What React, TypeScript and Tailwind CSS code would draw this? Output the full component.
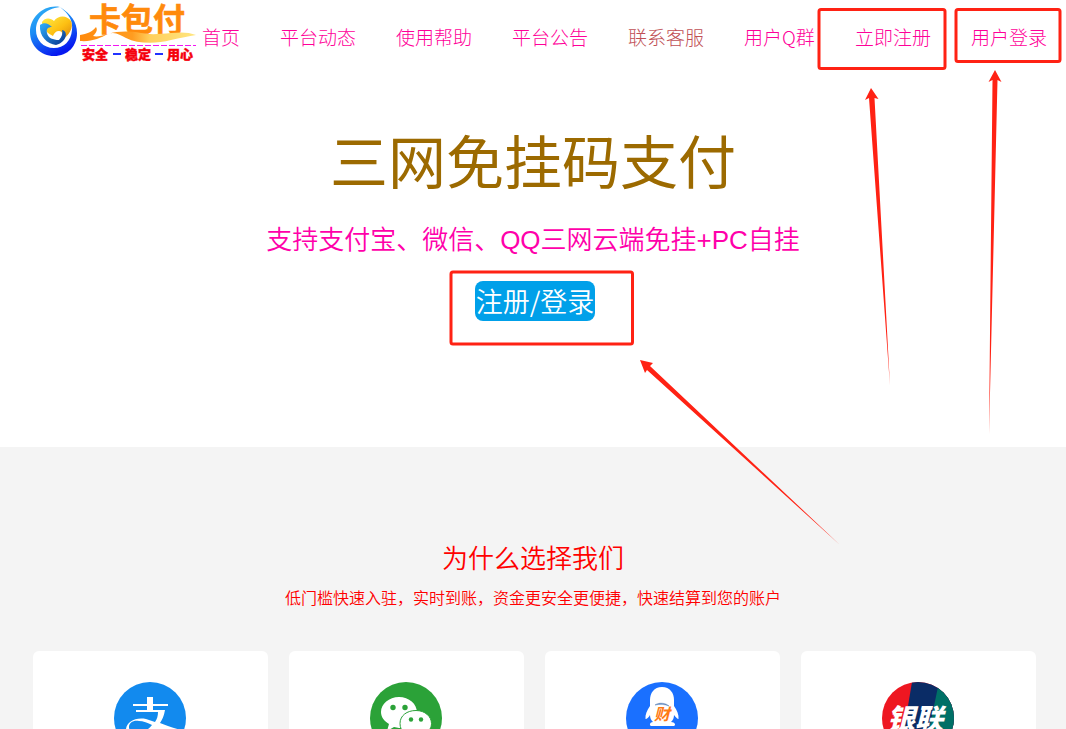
import type { ReactNode } from "react";

const navItems = [
  { label: "首页", color: "text-[#ff0099]" },
  { label: "平台动态", color: "text-[#ff0099]" },
  { label: "使用帮助", color: "text-[#ff0099]" },
  { label: "平台公告", color: "text-[#ff0099]" },
  { label: "联系客服", color: "text-[#c04f55]" },
  { label: "用户Q群", color: "text-[#ff0099]" },
  { label: "立即注册", color: "text-[#ff0099]" },
  { label: "用户登录", color: "text-[#ff0099]" },
];

function Logo() {
  return (
    <svg className="overflow-visible" width="176" height="64" viewBox="24 0 176 64" role="img" aria-label="卡包付">
      <defs>
        <linearGradient id="ring" x1="0" y1="0" x2="0.5" y2="1">
          <stop offset="0" stopColor="#35b6f5" />
          <stop offset="0.45" stopColor="#1b8df5" />
          <stop offset="1" stopColor="#0719f0" />
        </linearGradient>
        <linearGradient id="heart" x1="0" y1="0" x2="1" y2="1">
          <stop offset="0" stopColor="#fff04a" />
          <stop offset="0.55" stopColor="#fdbf12" />
          <stop offset="1" stopColor="#d9820c" />
        </linearGradient>
        <linearGradient id="hand" x1="0" y1="0" x2="1" y2="1">
          <stop offset="0" stopColor="#2fb0ff" />
          <stop offset="1" stopColor="#06328c" />
        </linearGradient>
        <linearGradient id="swoosh" x1="0" y1="0" x2="1" y2="0">
          <stop offset="0" stopColor="#ff8a0c" />
          <stop offset="0.45" stopColor="#ff9c20" />
          <stop offset="0.6" stopColor="#ffcf5c" />
          <stop offset="1" stopColor="#ffe680" />
        </linearGradient>
      </defs>
      <path
        d="M60 7C44 4 30 17 30 32c0 14 11 24 24 24 14 0 23-10 23-23 0-11-6-19-17-26 9 7 13 14 12 23-1 11-8 18-18 18-11 0-18-8-18-18C36 18 45 9 60 7Z"
        fill="url(#ring)"
      />
      <path
        d="M42 22c3-5 9-4 12-1 4-6 13-6 17 0 3 7-2 14-9 19 1-5 1-9-3-9-3 0-5 2-6 5-4-2-12-7-11-14Z"
        fill="url(#heart)"
      />
      <path
        d="M40 25c4-3 8-2 12 2-4 0-6 2-5 6 1 5 6 7 12 7 3-3 4-7 3-10 5 1 5 7 1 11-2 2-4 3-7 4-9-1-17-9-16-20Z"
        fill="url(#hand)"
      />
      <text
        x="89"
        y="31"
        fontSize="32"
        fontWeight="700"
        fill="#ff8a0c"
        stroke="#ff8a0c"
        strokeWidth="0.6"
        className="font-['Noto_Sans_CJK_SC',sans-serif]"
      >
        卡包付
      </text>
      <path
        d="M96 27c-4 5-9 7-16 8v6c12 1 20-3 28-7 7-3 12 1 18 4 12 6 30 6 45 2 9-2 18-4 25-5-7-3-16-3-25-2-12 1-20 2-30 0-12-2-23-2-33 1-7 2-11 3-15 2 3-3 5-6 3-9Z"
        fill="url(#swoosh)"
      />
      <path d="M81 45.5h115" stroke="#f216f2" strokeWidth="1" strokeDasharray="6 2" />
      <g
        fontSize="13"
        fontWeight="900"
        fill="#f5000c"
        stroke="#f5000c"
        strokeWidth="0.4"
        className="font-['Noto_Sans_CJK_SC',sans-serif]"
      >
        <text x="82" y="59">安全</text>
        <text x="125" y="59">稳定</text>
        <text x="167" y="59">用心</text>
      </g>
      <path d="M113 54h8M155 54h8" stroke="#2233ff" strokeWidth="2" />
    </svg>
  );
}

function AlipayIcon() {
  return (
    <svg width="72" height="72" viewBox="0 0 72 72" aria-hidden="true">
      <circle cx="36" cy="36" r="36" fill="#128aee" />
      <path
        d="M33 15h6v7h15v2H39v4h12c-1 6-3 10-5 13 7 3 13 5 25 8l-3 9c-10-3-17-7-25-11-6 7-13 10-20 10-8 0-12-4-11-10 1-7 9-12 20-10l9 3c2-3 3-6 3-10H22v-2h11v-4H19v-2h14Zm-8 24c-6-1-10 2-10 6s3 6 8 6c6 0 11-3 15-8-4-2-9-4-13-4Z"
        fill="#fff"
        fillRule="evenodd"
      />
    </svg>
  );
}

function WechatIcon() {
  return (
    <svg width="72" height="72" viewBox="0 0 72 72" aria-hidden="true">
      <circle cx="36" cy="36" r="36" fill="#2ba238" />
      <path d="M29 15c10 0 18 7 18 15.5S39 46 29 46l-5-1-7 4 2-7c-5-3-8-7-8-12 0-8 8-15 18-15Z" fill="#fff" />
      <circle cx="23" cy="25.5" r="2.7" fill="#2ba238" />
      <circle cx="35" cy="25.5" r="2.7" fill="#2ba238" />
      <path
        d="M46 28.5c9 0 15.500 6 15.500 13 0 4-2 7-6 10l2 6-7-3-5 1c-9 0-15.500-6-15.500-14s7-13 16-13Z"
        fill="#fff"
        stroke="#2ba238"
        strokeWidth="1"
      />
      <circle cx="41" cy="37.5" r="2.2" fill="#2ba238" />
      <circle cx="51" cy="37.5" r="2.2" fill="#2ba238" />
    </svg>
  );
}

function QqIcon() {
  return (
    <svg width="72" height="72" viewBox="0 0 72 72" aria-hidden="true">
      <circle cx="36" cy="36" r="36" fill="#1a70ff" />
      <path
        d="M36 5c8 0 12 6 12 13v6c3 4 5 9 4.500 13-1 0-3-2-4.500-4 0 3-1 5-3 7 4 0 5 3 3 4H25c-2-1-1-4 2-4-2-2-3-4-3-7-1 2-3 4-4.500 4C19 33 21 28 24 24v-6c0-7 4-13 12-13Z"
        fill="#fff"
      />
      <path d="M29 23c4-3 11-2 14 1-5-2-9-2-14-1Z" fill="#5a82b8" stroke="#5a82b8" strokeWidth="0.5" />
      <text
        x="28"
        y="38"
        fontSize="16"
        fontWeight="700"
        fontStyle="italic"
        fill="#ff7a14"
        className="font-['Noto_Sans_CJK_SC',sans-serif]"
      >
        财
      </text>
    </svg>
  );
}

function UnionPayIcon() {
  return (
    <svg width="72" height="72" viewBox="0 0 72 72" aria-hidden="true">
      <clipPath id="union">
        <circle cx="36" cy="36" r="36" />
      </clipPath>
      <g clipPath="url(#union)">
        <rect width="72" height="72" fill="#ee1721" />
        <path d="M30 0h42v72H18Z" fill="#0a2c66" />
        <path d="M57 0h15v72H42Z" fill="#007066" />
      </g>
      <text
        x="5"
        y="47"
        fontSize="28"
        fontWeight="900"
        fontStyle="italic"
        fill="#fff"
        className="font-['Noto_Sans_CJK_SC',sans-serif]"
      >
        银联
      </text>
    </svg>
  );
}

function Card({ children }: { children: ReactNode }) {
  return <div className="flex h-60 justify-center rounded-md bg-white pt-[31px] pr-0.5">{children}</div>;
}

// Hand-drawn style callouts that sit over the page
function Callouts() {
  return (
    <svg
      className="pointer-events-none absolute top-0 left-0"
      width="1066"
      height="600"
      viewBox="0 0 1066 600"
      aria-hidden="true"
    >
      <g fill="none" stroke="#ff2214" strokeWidth="3">
        <rect x="819" y="9.5" width="126" height="59" rx="2" />
        <rect x="956" y="9.5" width="104" height="52" rx="2" />
        <rect x="451" y="272" width="181.5" height="72" rx="2" />
      </g>
      <g fill="#ff2214">
        <path d="M871 88l7.500 11-4-1 15.500 288-21-288-4 2Z" />
        <path d="M995 70l6.500 12-4-2-8.500 355 3.500-355-4 2Z" />
        <path d="M640 360l13 3-3 3 190 179-193-175-2 3Z" />
      </g>
    </svg>
  );
}

export default function App() {
  return (
    <main className="relative flex h-screen flex-col overflow-hidden bg-white font-['Liberation_Sans','Noto_Sans_CJK_SC',sans-serif]">
      <header className="flex h-[74px] shrink-0 items-start pl-6">
        <a href="#home" className="shrink-0">
          <Logo />
        </a>
        <nav className="flex h-[74px] items-center gap-10 pl-0.5 font-['Noto_Sans_CJK_SC',sans-serif] text-[19px] font-light whitespace-nowrap">
          {navItems.map((item) => (
            <a key={item.label} href="#nav" className={item.color}>
              {item.label}
            </a>
          ))}
        </nav>
      </header>

      <section className="flex h-[373px] shrink-0 flex-col items-center pt-[52px] text-center">
        <h1 className="text-[58px] leading-[76px] text-[#9c6a00]">三网免挂码支付</h1>
        <p className="mt-[18px] text-[26px] leading-10 font-[350] text-[#ff00aa]">
          支持支付宝、微信、QQ三网云端免挂+PC自挂
        </p>
        <button
          type="button"
          className="mt-[21px] ml-1 h-10 w-[120px] rounded-lg bg-[#00a0e9] font-['Noto_Sans_CJK_SC',sans-serif] text-[27px] leading-10 font-[350] whitespace-nowrap text-white"
        >
          注册/登录
        </button>
      </section>

      <section className="grow bg-[#f4f4f4] pt-[92px]">
        <h2 className="text-center text-[26px] leading-10 font-[350] text-[#ff0000]">为什么选择我们</h2>
        <p className="mt-2 text-center text-base font-[350] text-[#ff0000]">
          低门槛快速入驻，实时到账，资金更安全更便捷，快速结算到您的账户
        </p>
        <div className="mt-10 grid grid-cols-4 gap-[21px] pr-[30px] pl-[33px]">
          <Card>
            <AlipayIcon />
          </Card>
          <Card>
            <WechatIcon />
          </Card>
          <Card>
            <QqIcon />
          </Card>
          <Card>
            <UnionPayIcon />
          </Card>
        </div>
      </section>

      <Callouts />
    </main>
  );
}
